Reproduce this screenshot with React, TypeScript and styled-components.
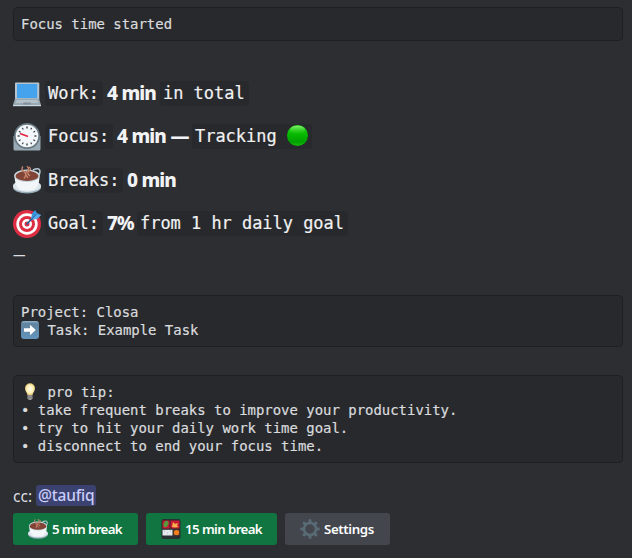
import React from 'react';
import styled, { createGlobalStyle } from 'styled-components';

const GlobalStyle = createGlobalStyle`
  * { box-sizing: border-box; }
  body { margin: 0; background: #2d2e32; }
`;

const sans = `"Noto Sans", "Open Sans", sans-serif`;
const mono = `"DejaVu Sans Mono", "Liberation Mono", monospace`;

const Message = styled.main`
  width: 632px;
  height: 558px;
  padding: 7px 9px 0 13px;
  overflow: hidden;
  background: #2d2e32;
  color: #dbdee1;
  font-family: ${sans};
`;

const CodeBlock = styled.pre`
  margin: 0;
  padding: 7px;
  border: 1px solid #1f2023;
  border-radius: 4px;
  background: #28292c;
  color: #d9dbde;
  font: 13.95px/18px ${mono};
  -webkit-text-stroke: 0.2px currentColor;
`;

const CodeLine = styled.div`
  display: flex;
  align-items: center;
  height: 18px;
  white-space: pre;
  & > svg { flex: none; }
`;

const Stats = styled.section`
  margin-top: 31px;
`;

const StatRow = styled.div`
  display: flex;
  align-items: center;
  height: 43.3px;
  white-space: pre;
`;

const InlineCode = styled.code<{ $width: number }>`
  display: flex;
  align-items: center;
  width: ${p => p.$width}px;
  height: 25px;
  margin-left: 4px;
  padding-left: 3px;
  border-radius: 4px;
  background: #28292c;
  color: #f0f1f2;
  font: 16.95px/25px ${mono};
  -webkit-text-stroke: 0.2px currentColor;
  & > svg { flex: none; margin: -2px 0 0 -1px; }
`;

const Value = styled.strong<{ $width: number }>`
  width: ${p => p.$width}px;
  margin-left: 4px;
  color: #f2f3f5;
  font: 800 19px/25px ${sans};
  letter-spacing: -0.9px;
  word-spacing: 0.4px;
`;

const Divider = styled.div`
  height: 22px;
  margin: -1px 0 28.800px;
  font: 500 12.5px/22px ${sans};
`;

const Gap = styled.div<{ $h: number }>`
  height: ${p => p.$h}px;
`;

const Cc = styled.div`
  display: flex;
  align-items: center;
  height: 22px;
  margin-top: 22px;
  font: 15.5px/22px ${sans};
`;

const Mention = styled.span`
  width: 60px;
  height: 21px;
  margin-left: 4px;
  padding-left: 2px;
  border-radius: 3px;
  background: #3c4270;
  color: #c9cdfb;
  font-weight: 500;
  line-height: 21px;
  letter-spacing: -0.2px;
`;

const Actions = styled.div`
  display: flex;
  gap: 8px;
  margin-top: 6px;
`;

const Button = styled.button<{ $width: number; $neutral?: boolean }>`
  display: flex;
  align-items: center;
  width: ${p => p.$width}px;
  height: 32px;
  padding: 0 0 0 15px;
  border: 0;
  border-radius: 3px;
  background: ${p => (p.$neutral ? '#44464e' : '#107540')};
  color: #fff;
  font: 600 13.3px/32px ${sans};
  letter-spacing: ${p => (p.$neutral ? -0.4 : -0.65)}px;
  word-spacing: ${p => (p.$neutral ? 0 : 0.2)}px;
  white-space: nowrap;
  & > svg { flex: none; margin-right: 4px; }
`;

const Laptop = () => (
  <svg width="28" height="28" viewBox="0 0 28 28">
    <path d="M2.8 2.5h22.5a1 1 0 0 1 1 1v16H2V3.5a1 1 0 0 1 .8-1z" fill="#b4c3cd" />
    <path d="M4 4h20.2v14H4z" fill="#45a3ed" />
    <path d="M2 18.5h24l2 6.5H0z" fill="#9aaab5" />
    <path d="M3.5 20h21l.8 3H2.7z" fill="#b5c1c9" />
    <path d="M10.5 22.5h7l.7 2H9.8z" fill="#80909c" />
    <path d="M0 25h28v1.2H0z" fill="#ccd6dd" />
  </svg>
);

const Clock = () => (
  <svg width="28" height="28" viewBox="0 0 28 28">
    <path d="M.5 13h27v13q0 1.500-1.500 1.500H2Q.5 27.500.5 26z" fill="#9aaab4" />
    <circle cx="14" cy="13" r="13" fill="#667781" />
    <circle cx="14" cy="13" r="11.300" fill="#f4f7f9" />
    {Array.from({ length: 12 }, (_, i) => (
      <path key={i} d="M14 3.600v2" stroke="#344047" strokeWidth={i % 3 ? 1.1 : 1.4} transform={`rotate(${i * 30} 14 13)`} />
    ))}
    <path d="m7 10.500 8 3" stroke="#e5233f" strokeWidth="1.700" />
  </svg>
);

const Coffee = ({ size = 28 }: { size?: number }) => (
  <svg width={size} height={size} viewBox="0 0 28 28">
    <path d="M20 4q6-3 7 1 0 5-5 6" fill="none" stroke="#b6c8d3" strokeWidth="1.500" />
    <ellipse cx="14" cy="21.500" rx="14" ry="6" fill="#96aab8" />
    <ellipse cx="14" cy="20" rx="14" ry="6" fill="#dce6eb" />
    <path d="M1.500 9.500h25q0 14-8.500 15h-8Q2 23.500 1.500 9.500z" fill="#f2f6f8" />
    <ellipse cx="14" cy="9.800" rx="12.800" ry="6.300" fill="#cad8df" />
    <ellipse cx="14" cy="10" rx="11.500" ry="5.100" fill="#814436" />
    <path d="M10 .5q-2.500 2.500 1 5t0 7M14 0q3 3 0 5t1 7M16 1q3 2 0 4t1 5" fill="none" stroke="#c98770" strokeWidth="1.300" />
  </svg>
);

const Target = () => (
  <svg width="28" height="28" viewBox="0 0 28 28">
    <circle cx="14" cy="14" r="14" fill="#dd2e44" />
    <circle cx="14" cy="14" r="10.700" fill="#fff" />
    <circle cx="14" cy="14" r="8" fill="#dd2e44" />
    <circle cx="14" cy="14" r="5" fill="#fff" />
    <circle cx="14" cy="14" r="2.500" fill="#dd2e44" />
    <path d="m13.500 14.500 9-10" stroke="#226699" strokeWidth="1.500" />
    <path d="m18 9.500 1-6L22 0l2 3 4 2-4 4z" fill="#3b94d9" />
    <path d="m18.500 9.500 5-5 4.500.5-4 4z" fill="#55acee" />
    <path d="m14 14.500 9-10" stroke="#226699" />
  </svg>
);

const GreenDot = () => (
  <svg width="23" height="23" viewBox="0 0 23 23">
    <defs>
      <linearGradient id="dot" x2="0" y2="1">
        <stop stopColor="#29d51e" /><stop offset=".45" stopColor="#06b900" />
        <stop offset=".8" stopColor="#009f00" /><stop offset="1" stopColor="#16bd0b" />
      </linearGradient>
      <linearGradient id="dot-shine" x2="0" y2="1">
        <stop stopColor="#9af782" stopOpacity=".8" /><stop offset="1" stopColor="#39cf29" stopOpacity=".1" />
      </linearGradient>
    </defs>
    <circle cx="11.500" cy="11.500" r="10.500" fill="url(#dot)" />
    <ellipse cx="11.500" cy="5.700" rx="7.300" ry="4" fill="url(#dot-shine)" />
  </svg>
);

const ArrowTile = () => (
  <svg width="18" height="18" viewBox="0 0 18 18">
    <defs>
      <linearGradient id="tile" x2="0" y2="1">
        <stop stopColor="#91b4ce" /><stop offset=".15" stopColor="#60839f" /><stop offset="1" stopColor="#6495bd" />
      </linearGradient>
    </defs>
    <rect width="18" height="18" rx="3" fill="url(#tile)" />
    <path d="M3 7.200h6V3.800l5.800 5.200L9 14.200v-3.500H3z" fill="#fff" />
  </svg>
);

const Bulb = () => (
  <svg width="18" height="18" viewBox="0 0 18 18">
    <defs>
      <radialGradient id="glow"><stop stopColor="#fffef0" /><stop offset=".65" stopColor="#fff1b7" /><stop offset="1" stopColor="#e3c475" /></radialGradient>
    </defs>
    <path d="M6.500 12C6 9.500 4 8 4 5.200a5 5 0 0 1 10 0C14 8 12 9.500 11.500 12z" fill="url(#glow)" />
    <path d="M6.500 12h5v3.500L10 17H8l-1.500-1.500z" fill="#989997" />
    <path d="M6.500 13h5m-5 1.800h5" stroke="#6e7071" strokeWidth=".7" />
  </svg>
);

const Bento = () => (
  <svg width="20" height="20" viewBox="0 0 20 20">
    <rect x=".5" y="0" width="19" height="20" rx="2" fill="#292f33" />
    <path d="M1.500 1.500h7v8h-7zM9.500 1.500h9v8h-9z" fill="#c91932" />
    <ellipse cx="5" cy="5" rx="2.200" ry="3.200" fill="#57993d" transform="rotate(25 5 5)" />
    <path d="m11 8 1-5 2 2 3-1-1 3 2 1-4 .500z" fill="#f9b34c" />
    <path d="M1.500 10.800h10v5.700h-10z" fill="#e5e9ee" />
    <path d="M3 12h1m2 2h1m2-2h1" stroke="#aab9c6" />
    <path d="M12.500 10.800h6v5.700h-6z" fill="#713c22" />
    <circle cx="15.500" cy="13.500" r="2.600" fill="#f4801f" />
  </svg>
);

const Gear = () => (
  <svg width="20" height="20" viewBox="0 0 20 20">
    {Array.from({ length: 8 }, (_, i) => (
      <path key={i} d="M8.300 4 8.800.300h2.400l.500 3.700z" fill="#596b75" transform={`rotate(${i * 45} 10 10)`} />
    ))}
    <circle cx="10" cy="10" r="6" fill="none" stroke="#596b75" strokeWidth="2.500" />
  </svg>
);

export default function App() {
  return (
    <>
      <GlobalStyle />
      <Message>
        <CodeBlock><CodeLine>Focus time started</CodeLine></CodeBlock>
        <Stats>
          <StatRow>
            <Laptop /><InlineCode $width={58}>Work:</InlineCode>
            <Value $width={49}>4 min</Value><InlineCode $width={89}>in total</InlineCode>
          </StatRow>
          <StatRow>
            <Clock /><InlineCode $width={68}>Focus:</InlineCode>
            <Value $width={71}>4 min —</Value><InlineCode $width={120}>Tracking <GreenDot /></InlineCode>
          </StatRow>
          <StatRow>
            <Coffee /><InlineCode $width={78}>Breaks:</InlineCode>
            <Value $width={49}>0 min</Value>
          </StatRow>
          <StatRow>
            <Target /><InlineCode $width={58}>Goal:</InlineCode>
            <Value $width={26}>7%</Value><InlineCode $width={211}>from 1 hr daily goal</InlineCode>
          </StatRow>
        </Stats>
        <Divider>—</Divider>
        <CodeBlock>
          <CodeLine>Project: Closa</CodeLine>
          <CodeLine><ArrowTile /> Task: Example Task</CodeLine>
        </CodeBlock>
        <Gap $h={28} />
        <CodeBlock>
          <CodeLine><Bulb /> pro tip:</CodeLine>
          <CodeLine>• take frequent breaks to improve your productivity.</CodeLine>
          <CodeLine>• try to hit your daily work time goal.</CodeLine>
          <CodeLine>• disconnect to end your focus time.</CodeLine>
        </CodeBlock>
        <Cc>cc: <Mention>@taufiq</Mention></Cc>
        <Actions>
          <Button $width={125}><Coffee size={20} />5 min break</Button>
          <Button $width={131}><Bento />15 min break</Button>
          <Button $width={105} $neutral><Gear />Settings</Button>
        </Actions>
      </Message>
    </>
  );
}
